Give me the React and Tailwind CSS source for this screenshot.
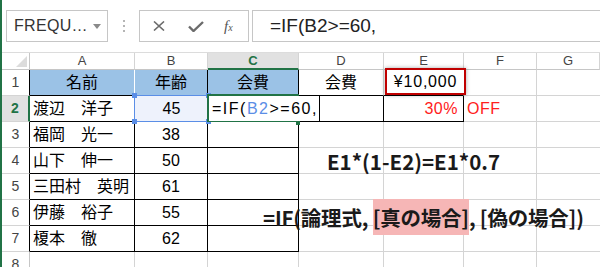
import React from 'react';

const cellFont = { fontFamily: '"Liberation Sans", "Noto Sans CJK JP", sans-serif' };

function ColHead({ label, active }) {
  return (
    <div
      className={`flex items-center justify-center text-[13px] border-r border-[#d4d4d4] ${
        active
          ? 'bg-[#e1e1e1] text-[#217346] font-bold border-b-2 border-b-[#217346]'
          : 'bg-white text-[#444] border-b border-b-[#c6c6c6]'
      }`}
    >
      {label}
    </div>
  );
}

function RowHead({ n, active, dark }) {
  return (
    <div
      className={`flex items-end justify-center pb-[2px] text-[14px] border-b border-[#d4d4d4] ${
        active
          ? 'bg-[#e1e1e1] text-[#217346] font-bold border-r-2 border-r-[#217346]'
          : dark
          ? 'bg-white text-[#444] border-r border-r-black'
          : 'bg-white text-[#444] border-r border-r-[#c6c6c6]'
      }`}
    >
      {n}
    </div>
  );
}

const people = [
  ['福岡　光一', '38'],
  ['山下　伸一', '50'],
  ['三田村　英明', '61'],
  ['伊藤　裕子', '55'],
  ['榎本　徹', '62'],
];

export default function App() {
  return (
    <div
      className="relative w-[600px] h-[267px] overflow-hidden bg-white border-l-2 border-[#217346]"
      style={cellFont}
    >
      {/* formula bar */}
      <div className="flex items-start h-[52px] pt-[10px]">
        <div className="ml-[4px] w-[102px] h-[32px] border border-[#c6c6c6] flex items-center pl-[7px] pr-[6px] text-[16px] text-[#333]">
          <span className="flex-1 tracking-[0.3px]">FREQU…</span>
          <span className="w-0 h-0 border-l-[4px] border-r-[4px] border-t-[5px] border-l-transparent border-r-transparent border-t-[#8a8a8a]" />
        </div>
        <div className="w-[31px] h-[32px] flex flex-col items-center justify-center gap-[3px]">
          <span className="w-[2px] h-[2px] bg-[#b5b5b5]" />
          <span className="w-[2px] h-[2px] bg-[#b5b5b5]" />
          <span className="w-[2px] h-[2px] bg-[#b5b5b5]" />
        </div>
        <div className="w-[110px] h-[32px] border border-[#c6c6c6] flex items-center">
          <svg className="ml-[13px]" width="12" height="10" viewBox="0 0 12 10">
            <path d="M1 0.5 L11 9.5 M11 0.5 L1 9.5" stroke="#6b6b6b" strokeWidth="1.6" />
          </svg>
          <svg className="ml-[23px]" width="16" height="11" viewBox="0 0 16 11">
            <path d="M1 5.5 L5.5 10 L15 1" fill="none" stroke="#6b6b6b" strokeWidth="2.4" />
          </svg>
          <span className="ml-[20px] text-[15px] text-[#555] italic" style={{ fontFamily: '"Liberation Serif", serif' }}>
            f<span className="text-[10px]">x</span>
          </span>
        </div>
        <div className="ml-[3px] flex-1 h-[32px] border-t border-b border-l border-[#c6c6c6] flex items-center pl-[17px] text-[19px] text-[#222]">
          =IF(B2&gt;=60,
        </div>
      </div>

      {/* sheet */}
      <div className="grid grid-cols-[28px_105px_73px_91px_85px_80px_73px_1fr] grid-rows-[17px_repeat(8,26px)] border-t border-[#dcdcdc] text-[16px] text-black">
        {/* header row */}
        <div className="relative bg-white border-r border-b border-[#c6c6c6]">
          <svg className="absolute right-[2px] bottom-[2px]" width="11" height="11" viewBox="0 0 11 11">
            <path d="M11 0 L11 11 L0 11 Z" fill="#dcdcdc" />
          </svg>
        </div>
        <ColHead label="A" />
        <ColHead label="B" />
        <ColHead label="C" active />
        <ColHead label="D" />
        <ColHead label="E" />
        <ColHead label="F" />
        <ColHead label="G" />

        {/* row 1 */}
        <RowHead n="1" dark />
        <div className="bg-[#9bc2e6] border-r border-r-white border-b border-b-black flex items-center justify-center">名前</div>
        <div className="bg-[#9bc2e6] border-r border-r-black border-b border-b-black flex items-center justify-center">年齢</div>
        <div className="bg-[#9bc2e6] border-r border-r-black border-b border-b-black flex items-center justify-center">会費</div>
        <div className="border-r border-r-[#d4d4d4] border-b border-b-black flex items-center justify-center">会費</div>
        <div className="relative border-r border-r-[#d4d4d4] border-b border-b-black">
          <div className="absolute left-[1px] top-[-2px] w-[81px] h-[27px] border-2 border-[#c00000] shadow-[0_0_4px_rgba(0,0,0,0.35)] flex items-center justify-center tracking-[0.8px] bg-white">
            ¥10,000
          </div>
        </div>
        <div className="border-r border-b border-[#d4d4d4]" />
        <div className="border-b border-[#d4d4d4]" />

        {/* row 2 */}
        <RowHead n="2" active />
        <div className="border-r border-r-black border-b border-b-black flex items-center pl-[3px]">渡辺　洋子</div>
        <div className="relative border-b border-b-black bg-[#eef2fc] flex items-center justify-center">
          45
          <span className="absolute inset-[-1px] border-[1.5px] border-[#5b8ee6]" />
          <span className="absolute left-[-3px] top-[-3px] w-[5px] h-[5px] bg-[#5b8ee6]" />
          <span className="absolute right-[-3px] top-[-3px] w-[5px] h-[5px] bg-[#5b8ee6]" />
          <span className="absolute left-[-3px] bottom-[-3px] w-[5px] h-[5px] bg-[#5b8ee6]" />
          <span className="absolute right-[-3px] bottom-[-3px] w-[5px] h-[5px] bg-[#5b8ee6]" />
        </div>
        <div className="relative z-10">
          <span className="absolute left-[-1px] top-[-2px] w-[92px] h-[28px] border-l-2 border-t-2 border-b-2 border-[#217346]" />
          <span className="absolute right-[-1px] bottom-[-3px] w-[4px] h-[4px] bg-[#217346]" />
          <div className="absolute left-[1px] top-0 h-[25px] w-[111px] bg-white border-r border-black flex items-center pl-[3px] tracking-[1.5px] whitespace-nowrap">
            =IF(<span className="text-[#5b8ee6]">B2</span>&gt;=60,
          </div>
        </div>
        <div className="border-r border-r-black border-b border-b-black" />
        <div className="border-r border-r-black border-b border-b-black flex items-center justify-end pr-[5px] text-[#ff2020] tracking-[0.5px]">30%</div>
        <div className="border-r border-b border-[#d4d4d4] flex items-center pl-[3px] text-[#ff2020] tracking-[0.5px]">OFF</div>
        <div className="border-b border-[#d4d4d4]" />

        {/* rows 3-7 */}
        {people.map(([name, age], i) => (
          <React.Fragment key={name}>
            <RowHead n={String(i + 3)} dark />
            <div className="border-r border-r-black border-b border-b-black flex items-center pl-[3px]">{name}</div>
            <div className="border-r border-r-black border-b border-b-black flex items-center justify-center">{age}</div>
            <div className="border-r border-r-black border-b border-b-black" />
            <div className="border-r border-b border-[#d4d4d4]" />
            <div className="border-r border-b border-[#d4d4d4]" />
            <div className="border-r border-b border-[#d4d4d4]" />
            <div className="border-b border-[#d4d4d4]" />
          </React.Fragment>
        ))}

        {/* row 8 */}
        <RowHead n="8" />
        <div className="border-r border-b border-[#d4d4d4]" />
        <div className="border-r border-b border-[#d4d4d4]" />
        <div className="border-r border-b border-[#d4d4d4]" />
        <div className="border-r border-b border-[#d4d4d4]" />
        <div className="border-r border-b border-[#d4d4d4]" />
        <div className="border-r border-b border-[#d4d4d4]" />
        <div className="border-b border-[#d4d4d4]" />
      </div>

      {/* annotations */}
      <div
        className="absolute left-[325px] top-[151px] text-[20.5px] font-semibold text-[#1a1a1a] leading-none whitespace-nowrap"
        style={{ fontFamily: '"Noto Sans CJK JP", sans-serif' }}
      >
        E1*(1-E2)=E1*0.7
      </div>
      <div
        className="absolute left-[261px] top-[207px] text-[20.5px] font-semibold text-[#1a1a1a] leading-none whitespace-nowrap tracking-[-0.2px]"
        style={{ fontFamily: '"Noto Sans CJK JP", sans-serif' }}
      >
        =IF(論理式, <span className="bg-[#f6b6b6] py-[3px]">[真の場合]</span>, [偽の場合])
      </div>
    </div>
  );
}
